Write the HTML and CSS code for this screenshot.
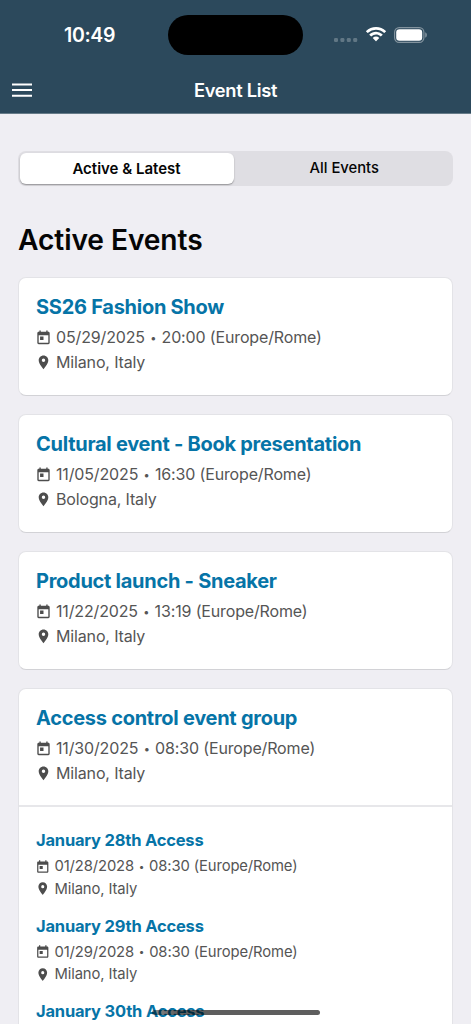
FILE: index.html
```html
<!DOCTYPE html>
<html lang="en">
<head>
<meta charset="utf-8">
<title>Event List</title>
<link rel="stylesheet" href="styles.css">
</head>
<body>
<svg class="sprite" aria-hidden="true">
  <symbol id="calendar" viewBox="0 0 24 24"><path d="M19 4h-1V2h-2v2H8V2H6v2H5c-1.100 0-2 .9-2 2v14c0 1.100.9 2 2 2h14c1.100 0 2-.9 2-2V6c0-1.100-.9-2-2-2zm0 16H5V9h14v11zM7 11h5v5H7z"/></symbol>
  <symbol id="pin" viewBox="0 0 24 24"><path d="M12 2C8.130 2 5 5.130 5 9c0 5.250 7 13 7 13s7-7.750 7-13c0-3.870-3.130-7-7-7zm0 9.500a2.500 2.500 0 1 1 0-5 2.500 2.500 0 0 1 0 5z"/></symbol>
</svg>
<div class="screen">
  <header class="header">
    <div class="status">
      <span class="time">10:49</span>
      <span class="island"></span>
      <div class="indicators">
        <svg class="signal" viewBox="0 0 24 4"><rect x="0" width="4" height="4" rx="1.200"/><rect x="6.400" width="4" height="4" rx="1.200"/><rect x="12.800" width="4" height="4" rx="1.200"/><rect x="19.200" width="4" height="4" rx="1.200"/></svg>
        <svg class="wifi" viewBox="0 0 20 15"><path d="M10 0C6.200 0 2.700 1.450.1 3.900a.4.400 0 0 0 0 .6l1.400 1.350a.4.400 0 0 0 .6 0A11.400 11.400 0 0 1 10 2.800c3.050 0 5.800 1.150 7.900 3.050a.4.400 0 0 0 .6 0l1.400-1.350a.4.400 0 0 0 0-.6A14.400 14.400 0 0 0 10 0z"/><path d="M10 4.800c-2.500 0-4.750.95-6.450 2.550a.4.400 0 0 0 0 .6l1.400 1.350a.5.500 0 0 0 .6 0A6.500 6.500 0 0 1 10 7.500c1.700 0 3.250.65 4.450 1.800a.5.500 0 0 0 .6 0l1.400-1.350a.4.400 0 0 0 0-.6A9.500 9.500 0 0 0 10 4.800z"/><path d="M10 9.600c-1.200 0-2.250.4-3.050 1.150a.4.400 0 0 0 0 .6l2.700 2.750a.5.500 0 0 0 .7 0l2.700-2.750a.4.400 0 0 0 0-.6A4.400 4.400 0 0 0 10 9.600z"/></svg>
        <svg class="battery" viewBox="0 0 33 16"><rect class="shell" x=".6" y=".6" width="29.300" height="14.800" rx="4.600"/><rect class="charge" x="2.200" y="2.300" width="26" height="11.400" rx="3.200"/><path class="tip" d="M31.200 5.300c1 .4 1.700 1.500 1.700 2.700s-.7 2.300-1.700 2.700z"/></svg>
      </div>
    </div>
    <div class="navbar">
      <svg class="menu" viewBox="0 0 20 14"><path d="M0 1.400h20M0 7.100h20M0 12.800h20"/></svg>
      <h1 class="nav-title">Event List</h1>
    </div>
  </header>
  <main class="content">
    <div class="segments">
      <div class="segment selected">Active &amp; Latest</div>
      <div class="segment">All Events</div>
    </div>
    <h2 class="heading">Active Events</h2>
    <article class="card">
      <div class="event">
        <h3 class="event-title">SS26 Fashion Show</h3>
        <div class="meta"><svg><use href="#calendar"/></svg><span>05/29/2025 <b>•</b> 20:00 (Europe/Rome)</span></div>
        <div class="meta"><svg><use href="#pin"/></svg><span>Milano, Italy</span></div>
      </div>
    </article>
    <article class="card">
      <div class="event">
        <h3 class="event-title">Cultural event - Book presentation</h3>
        <div class="meta"><svg><use href="#calendar"/></svg><span>11/05/2025 <b>•</b> 16:30 (Europe/Rome)</span></div>
        <div class="meta"><svg><use href="#pin"/></svg><span>Bologna, Italy</span></div>
      </div>
    </article>
    <article class="card">
      <div class="event">
        <h3 class="event-title">Product launch - Sneaker</h3>
        <div class="meta"><svg><use href="#calendar"/></svg><span>11/22/2025 <b>•</b> 13:19 (Europe/Rome)</span></div>
        <div class="meta"><svg><use href="#pin"/></svg><span>Milano, Italy</span></div>
      </div>
    </article>
    <article class="card">
      <div class="event">
        <h3 class="event-title">Access control event group</h3>
        <div class="meta"><svg><use href="#calendar"/></svg><span>11/30/2025 <b>•</b> 08:30 (Europe/Rome)</span></div>
        <div class="meta"><svg><use href="#pin"/></svg><span>Milano, Italy</span></div>
      </div>
      <div class="children">
        <div class="child">
          <h4 class="child-title">January 28th Access</h4>
          <div class="meta"><svg><use href="#calendar"/></svg><span>01/28/2028 <b>•</b> 08:30 (Europe/Rome)</span></div>
          <div class="meta"><svg><use href="#pin"/></svg><span>Milano, Italy</span></div>
        </div>
        <div class="child">
          <h4 class="child-title">January 29th Access</h4>
          <div class="meta"><svg><use href="#calendar"/></svg><span>01/29/2028 <b>•</b> 08:30 (Europe/Rome)</span></div>
          <div class="meta"><svg><use href="#pin"/></svg><span>Milano, Italy</span></div>
        </div>
        <div class="child">
          <h4 class="child-title">January 30th Access</h4>
        </div>
      </div>
    </article>
  </main>
  <div class="home-indicator"></div>
</div>
</body>
</html>
```
FILE: styles.css
```css
* { box-sizing: border-box; }
body { margin: 0; font-family: Inter, "Liberation Sans", sans-serif; background: #efeef3; color: #050505; }
h1, h2, h3, h4 { margin: 0; }
.sprite { position: absolute; width: 0; height: 0; }
.screen { position: relative; width: 471px; height: 1024px; overflow: hidden; }

.header { height: 114px; background: #2c495c; border-bottom: 1px solid #667b88; color: #fff; }
.status { display: grid; grid-template-columns: 168px 135px 1fr; height: 69px; padding-top: 15px; }
.time { padding-left: 64px; font-size: 19.500px; font-weight: 600; line-height: 41px; letter-spacing: -.35px; }
.island { height: 40px; border-radius: 20px; background: #000; }
.indicators { display: flex; padding-left: 31px; }
.signal { width: 24px; height: 4px; margin-top: 23px; fill: #617785; }
.wifi { width: 20px; height: 15px; margin: 12px 0 0 8px; fill: #fff; }
.battery { width: 33px; height: 16px; margin: 12px 0 0 8px; }
.shell { fill: none; stroke: #82939e; stroke-width: 1.200; }
.charge { fill: #fff; }
.tip { fill: #82939e; }
.navbar { display: grid; grid-template-columns: 32px 1fr 32px; height: 42px; align-items: center; }
.menu { width: 20px; height: 14px; margin-left: 12px; fill: none; stroke: #fff; stroke-width: 2; }
.nav-title { font-size: 18.300px; font-weight: 600; line-height: 42px; text-align: center; letter-spacing: -.3px; }

.content { padding: 37px 18px 0; }
.segments { display: flex; height: 35px; border-radius: 8px; background: #dfdee3; }
.segment { flex: 1; padding-left: 2px; text-align: center; font-size: 14.800px; font-weight: 500; line-height: 35px; }
.selected { flex: 0 0 214px; height: 31px; margin: 2px 0 0 1.500px; padding: 0; border-radius: 6px; background: #fff; font-size: 15px; line-height: 31px; font-weight: 600; box-shadow: 0 1px 1.500px rgba(0,0,0,.35); }
.heading { margin-top: 34px; font-size: 28.200px; font-weight: 600; line-height: 40px; letter-spacing: -.1px; }

.card { height: 119px; margin-top: 18px; background: #fff; border: 1px solid #e3e3e7; border-bottom-color: #d2d2d6; border-radius: 8px; }
.heading + .card { margin-top: 17px; }
.card:last-child { height: 400px; }
.event { height: 116px; padding: 15px 17px 0; }
.event-title { font-size: 20px; line-height: 29px; font-weight: 700; color: #0674a7; letter-spacing: -.27px; white-space: nowrap; }
.meta { display: flex; gap: 4px; height: 25px; align-items: center; color: #555; font-size: 16px; line-height: 25px; letter-spacing: -.15px; white-space: nowrap; }
.meta b { display: inline-block; width: 8px; font-size: 11px; font-weight: 400; text-align: center; line-height: 1; vertical-align: 1.500px; letter-spacing: 0; }
.event-title + .meta { margin-top: 3px; }
.meta svg { flex: none; width: 17px; height: 16.500px; margin-left: -1px; fill: #4d4d4d; }

.children { border-top: 2px solid #e7e7ea; padding: 21px 17px 0; }
.child { height: 85.600px; }
.child-title { font-size: 16.500px; line-height: 25px; font-weight: 700; color: #0674a7; letter-spacing: -.2px; }
.child .meta { height: 22.500px; line-height: 22px; gap: 4px; font-size: 14.800px; letter-spacing: -.12px; }
.child .meta b { width: 7px; font-size: 10px; }
.child .meta svg { width: 15.500px; height: 15px; }
.child-title + .meta { margin-top: 2px; }
.home-indicator { position: absolute; left: 152px; top: 1010px; width: 168px; height: 5px; border-radius: 3px; background: linear-gradient(90deg, rgba(0,0,0,.45), rgba(0,0,0,.63) 15%); }
```
